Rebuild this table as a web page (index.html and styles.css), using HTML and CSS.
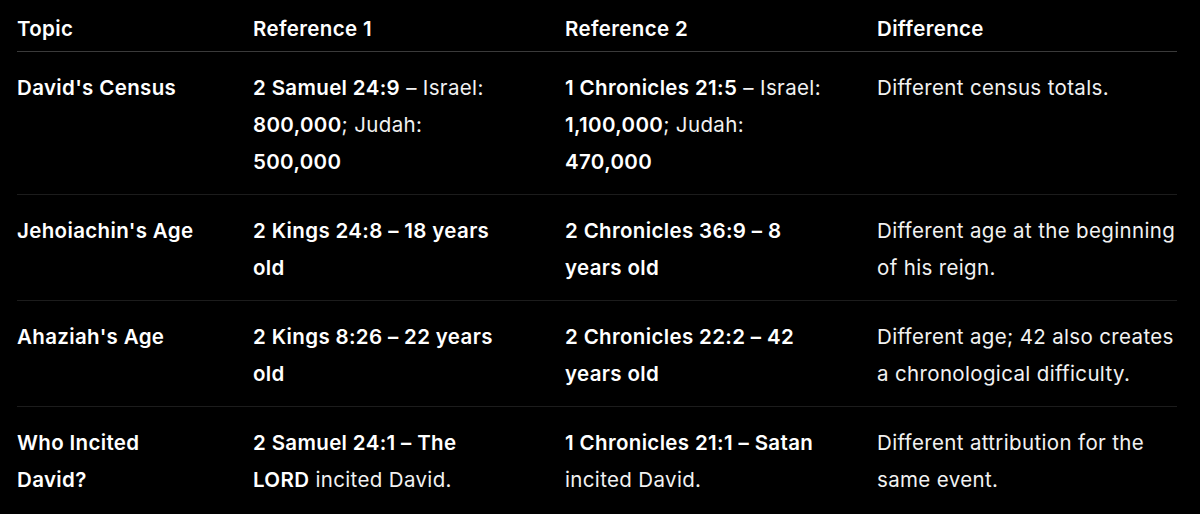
FILE: index.html
```html
<!DOCTYPE html>
<html lang="en">
<head>
<meta charset="utf-8">
<title>Biblical Discrepancies</title>
<link rel="stylesheet" href="styles.css">
</head>
<body>
<div class="wrap">
  <table class="compare">
    <colgroup>
      <col class="c-topic">
      <col class="c-ref">
      <col class="c-ref">
      <col class="c-diff">
    </colgroup>
    <thead>
      <tr>
        <th>Topic</th>
        <th>Reference 1</th>
        <th>Reference 2</th>
        <th>Difference</th>
      </tr>
    </thead>
    <tbody>
      <tr>
        <td class="topic">David's Census</td>
        <td><strong>2 Samuel 24:9</strong> – Israel: <strong>800,000</strong>; Judah: <strong>500,000</strong></td>
        <td><strong>1 Chronicles 21:5</strong> – Israel: <strong>1,100,000</strong>; Judah: <strong>470,000</strong></td>
        <td>Different census totals.</td>
      </tr>
      <tr>
        <td class="topic">Jehoiachin's Age</td>
        <td><strong>2 Kings 24:8 – 18 years old</strong></td>
        <td><strong>2 Chronicles 36:9 – 8 years old</strong></td>
        <td>Different age at the beginning of his reign.</td>
      </tr>
      <tr>
        <td class="topic">Ahaziah's Age</td>
        <td><strong>2 Kings 8:26 – 22 years old</strong></td>
        <td><strong>2 Chronicles 22:2 – 42 years old</strong></td>
        <td>Different age; 42 also creates a chronological difficulty.</td>
      </tr>
      <tr>
        <td class="topic">Who Incited David?</td>
        <td><strong>2 Samuel 24:1 – The LORD</strong> incited David.</td>
        <td><strong>1 Chronicles 21:1 – Satan</strong> incited David.</td>
        <td>Different attribution for the same event.</td>
      </tr>
    </tbody>
  </table>
</div>
</body>
</html>
```

FILE: styles.css
```css
html, body {
  margin: 0;
  background: #000;
}

body {
  color: #f2f2f2;
  font-family: Inter, "Noto Sans", "Liberation Sans", sans-serif;
  font-size: 20.5px;
  letter-spacing: 0.35px;
  line-height: 37px;
}

.wrap {
  padding-left: 17px;
}

.compare {
  width: 1160px;
  border-collapse: collapse;
  border-spacing: 0;
  table-layout: fixed;
}

.c-topic { width: 212px; }
.c-ref { width: 312px; }
.c-diff { width: 324px; }

.compare th {
  text-align: left;
  font-weight: 600;
  color: #fff;
  padding: 10px 28px 4px 24px;
  border-bottom: 1px solid #3a3a3a;
}

.compare td {
  vertical-align: top;
  padding: 17px 28px 14px 24px;
  border-bottom: 1px solid #1c1c1c;
}

.compare tbody tr:last-child td {
  border-bottom: none;
}

.compare th:first-child,
.compare td:first-child {
  padding-left: 0;
  padding-right: 24px;
}

.compare th:last-child,
.compare td:last-child {
  padding-right: 0;
}

.compare .topic {
  font-weight: 600;
  color: #fff;
}

.compare strong {
  font-weight: 600;
  color: #fff;
}
```
